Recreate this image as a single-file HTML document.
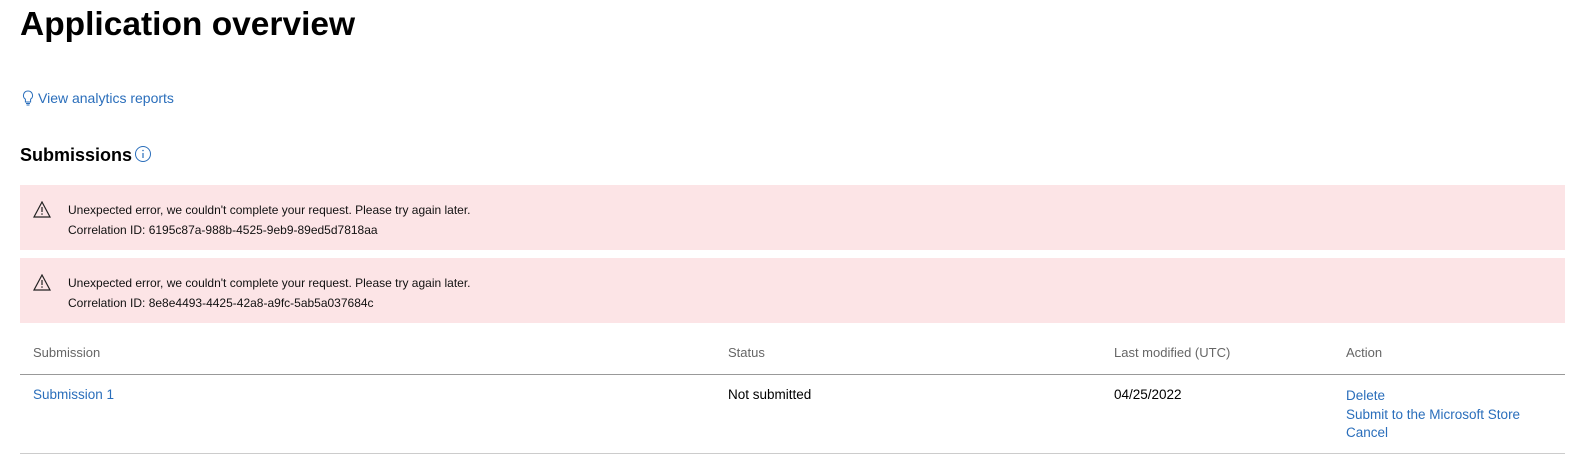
<!DOCTYPE html>
<html><head><style>
body{margin:0;width:1590px;height:463px;background:#fff;font-family:"Liberation Sans",sans-serif;color:#000;position:relative;overflow:hidden}
.a{position:absolute;white-space:nowrap}
h1{position:absolute;left:20px;top:6px;margin:0;font-size:33.5px;font-weight:bold}
.link{color:#2a6ebb}
.err{position:absolute;left:20px;width:1545px;height:65px;background:#fce4e6}
.err .t{position:absolute;left:48px;font-size:12px;color:#111}
.err svg{position:absolute;left:13px;top:16px}
.hd{font-size:13px;color:#666;top:345px}
.rw{font-size:13.5px;top:387px}
</style></head><body>
<h1>Application overview</h1>
<svg class="a" style="left:22px;top:90px" width="12" height="16" viewBox="0 0 12 16"><path d="M6 1a4.5 4.5 0 0 0-2.6 8.2V12h5.2V9.2A4.5 4.5 0 0 0 6 1zM4 13.5h4M4.5 15h3" fill="none" stroke="#2a6ebb" stroke-width="1"/></svg>
<div class="a link" style="left:38px;top:90px;font-size:14px">View analytics reports</div>
<div class="a" style="left:20px;top:145px;font-size:18px;font-weight:bold">Submissions</div>
<svg class="a" style="left:134px;top:145px" width="18" height="18" viewBox="0 0 18 18"><circle cx="9" cy="9" r="7.5" fill="none" stroke="#2a6ebb"/><path d="M9 8v5" stroke="#2a6ebb" stroke-width="1.2"/><circle cx="9" cy="5.5" r=".8" fill="#2a6ebb"/></svg>
<div class="err" style="top:185px">
<svg width="18" height="17" viewBox="0 0 18 17"><path d="M9 1L1 16h16z" fill="none" stroke="#222" stroke-width="1.2"/><path d="M9 6v5" stroke="#222" stroke-width="1.2"/><circle cx="9" cy="13" r=".8" fill="#222"/></svg>
<div class="t" style="top:18px">Unexpected error, we couldn't complete your request. Please try again later.</div>
<div class="t" style="top:38px">Correlation ID: 6195c87a-988b-4525-9eb9-89ed5d7818aa</div>
</div>
<div class="err" style="top:258px">
<svg width="18" height="17" viewBox="0 0 18 17"><path d="M9 1L1 16h16z" fill="none" stroke="#222" stroke-width="1.2"/><path d="M9 6v5" stroke="#222" stroke-width="1.2"/><circle cx="9" cy="13" r=".8" fill="#222"/></svg>
<div class="t" style="top:18px">Unexpected error, we couldn't complete your request. Please try again later.</div>
<div class="t" style="top:38px">Correlation ID: 8e8e4493-4425-42a8-a9fc-5ab5a037684c</div>
</div>
<div class="a hd" style="left:33px">Submission</div>
<div class="a hd" style="left:728px">Status</div>
<div class="a hd" style="left:1114px">Last modified (UTC)</div>
<div class="a hd" style="left:1346px">Action</div>
<div class="a" style="left:20px;top:374px;width:1545px;height:1px;background:#999"></div>
<div class="a rw link" style="left:33px">Submission 1</div>
<div class="a rw" style="left:728px">Not submitted</div>
<div class="a rw" style="left:1114px">04/25/2022</div>
<div class="a rw link" style="left:1346px;line-height:18.5px">Delete<br>Submit to the Microsoft Store<br>Cancel</div>
<div class="a" style="left:20px;top:453px;width:1545px;height:1px;background:#ccc"></div>
</body></html>
